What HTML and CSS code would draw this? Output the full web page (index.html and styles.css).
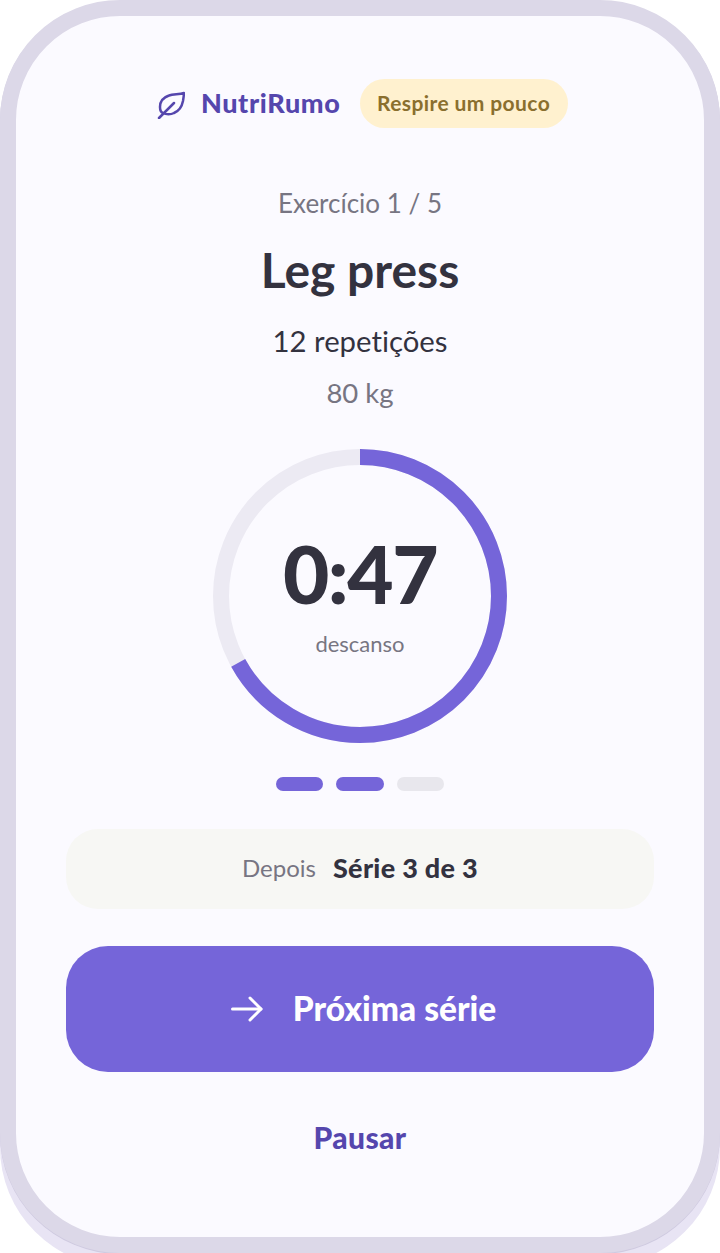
FILE: index.html
```html
<!DOCTYPE html>
<html lang="pt-BR">
<head>
<meta charset="utf-8">
<title>NutriRumo</title>
<link rel="stylesheet" href="styles.css">
</head>
<body>
<main class="phone">
  <header class="brand-row">
    <div class="brand">
      <svg class="leaf" viewBox="-5 0 33 28" fill="none" stroke="currentColor" stroke-width="2.5" stroke-linecap="round" stroke-linejoin="round">
        <path d="M2 27 L17 12"/>
        <path d="M27 2 C22 3.5 16 3 12 4.5 C6 6.5 3 11 3 16 C3 19 4.5 21.5 6 22 C9 23.5 14 23.5 17 22 C22 20 25 15 26 10 C26.5 7 26.8 4.5 27 2 Z"/>
      </svg>
      <span class="brand-name">NutriRumo</span>
    </div>
    <span class="pill">Respire um pouco</span>
  </header>

  <p class="exercise-count">Exercício 1 / 5</p>
  <h1 class="exercise-name">Leg press</h1>
  <p class="reps">12 repetições</p>
  <p class="weight">80 kg</p>

  <section class="timer">
    <svg class="ring" viewBox="0 0 294 294">
      <circle class="ring-track" cx="147" cy="147" r="139"/>
      <circle class="ring-value" cx="147" cy="147" r="139" pathLength="100" stroke-dasharray="67 100"/>
    </svg>
    <div class="timer-text">
      <span class="time">0:47</span>
      <span class="time-label">descanso</span>
    </div>
  </section>

  <div class="sets">
    <span class="set done"></span>
    <span class="set done"></span>
    <span class="set"></span>
  </div>

  <div class="next-up">
    <span class="next-label">Depois</span>
    <strong class="next-value">Série 3 de 3</strong>
  </div>

  <button class="primary" type="button">
    <svg class="arrow" viewBox="-7 0 39 26" fill="none" stroke="currentColor" stroke-width="3" stroke-linecap="round" stroke-linejoin="round">
      <path d="M1.5 13 H30"/>
      <path d="M19 2 L30 13 L19 24"/>
    </svg>
    <span class="primary-label">Próxima série</span>
  </button>

  <button class="secondary" type="button">Pausar</button>
</main>
</body>
</html>
```
FILE: styles.css
```css
* {
  box-sizing: border-box;
}

html,
body {
  margin: 0;
  height: 1253px;
  background: #ffffff;
  overflow: hidden;
}

body {
  font-family: "Lato", "Noto Sans", sans-serif;
  font-variant-ligatures: none;
  color: #33323f;
}

.phone {
  width: 720px;
  height: 1253px;
  border: 16px solid #dcd8e8;
  border-radius: 120px;
  background: #fbfaff;
  box-shadow: 0 1px 0 #cfcae0, 0 14px 0 #e8e4f4;
  display: flex;
  flex-direction: column;
  align-items: center;
  padding: 63px 50px 0;
}

.brand-row {
  display: flex;
  align-items: center;
  gap: 19px;
  height: 49px;
}

.brand {
  display: flex;
  align-items: center;
  gap: 16px;
  color: #5546ad;
}

.leaf {
  width: 33px;
  height: 28px;
  margin-top: 2px;
}

.brand-name {
  padding-bottom: 2px;
  font-size: 27px;
  font-weight: 900;
  letter-spacing: 0.65px;
}

.pill {
  display: flex;
  align-items: center;
  height: 49px;
  padding: 0 18px 2px 17.5px;
  border-radius: 25px;
  background: #fff1cf;
  color: #8a6f2e;
  font-size: 21px;
  font-weight: 700;
  letter-spacing: 0.4px;
}

.exercise-count,
.reps,
.weight {
  margin: 0;
  text-align: center;
}

.exercise-count {
  margin-top: 58px;
  font-size: 26px;
  line-height: 34px;
  color: #777582;
}

.exercise-name {
  margin: 21px 0 0;
  font-size: 48px;
  line-height: 58px;
  font-weight: 700;
}

.reps {
  margin-top: 23px;
  font-size: 29.3px;
  line-height: 38px;
}

.weight {
  margin-top: 15px;
  font-size: 27.5px;
  line-height: 36px;
  color: #777582;
}

.timer {
  position: relative;
  width: 294px;
  height: 294px;
  margin-top: 38px;
  flex: none;
}

.ring {
  display: block;
  width: 294px;
  height: 294px;
  transform: rotate(-90deg);
}

.ring-track,
.ring-value {
  fill: none;
  stroke-width: 16;
}

.ring-track {
  stroke: #eceaf3;
}

.ring-value {
  stroke: #7565d9;
}

.timer-text {
  position: absolute;
  inset: 0;
  display: flex;
  flex-direction: column;
  align-items: center;
}

.time {
  margin-top: 76px;
  font-size: 80px;
  line-height: 96px;
  font-weight: 900;
  letter-spacing: -1.5px;
}

.time-label {
  margin-top: 9px;
  font-size: 22px;
  line-height: 28px;
  color: #777582;
}

.sets {
  display: flex;
  gap: 13px;
  margin-top: 34px;
}

.set {
  width: 47.5px;
  height: 14px;
  border-radius: 7px;
  background: #e8e7ed;
}

.set.done {
  background: #7565d9;
}

.next-up {
  width: 100%;
  height: 80px;
  margin-top: 38px;
  padding-bottom: 3px;
  flex: none;
  display: flex;
  align-items: center;
  justify-content: center;
  gap: 17px;
  border-radius: 32px;
  background: #f7f7f4;
}

.next-label {
  color: #777582;
  font-size: 24px;
}

.next-value {
  font-size: 27px;
  font-weight: 900;
  letter-spacing: 0.3px;
}

.primary,
.secondary {
  border: 0;
  font-family: inherit;
  cursor: pointer;
}

.primary {
  width: 100%;
  height: 126px;
  margin-top: 37px;
  flex: none;
  display: flex;
  align-items: center;
  justify-content: center;
  gap: 30px;
  border-radius: 42px;
  background: #7565d9;
  color: #ffffff;
  font-size: 33.5px;
  font-weight: 900;
}

.primary-label {
  padding-bottom: 2px;
}

.arrow {
  width: 39px;
  height: 26px;
}

.secondary {
  margin-top: 44px;
  background: none;
  color: #5546ad;
  font-size: 30px;
  line-height: 40px;
  font-weight: 900;
  letter-spacing: 0.4px;
}
```
